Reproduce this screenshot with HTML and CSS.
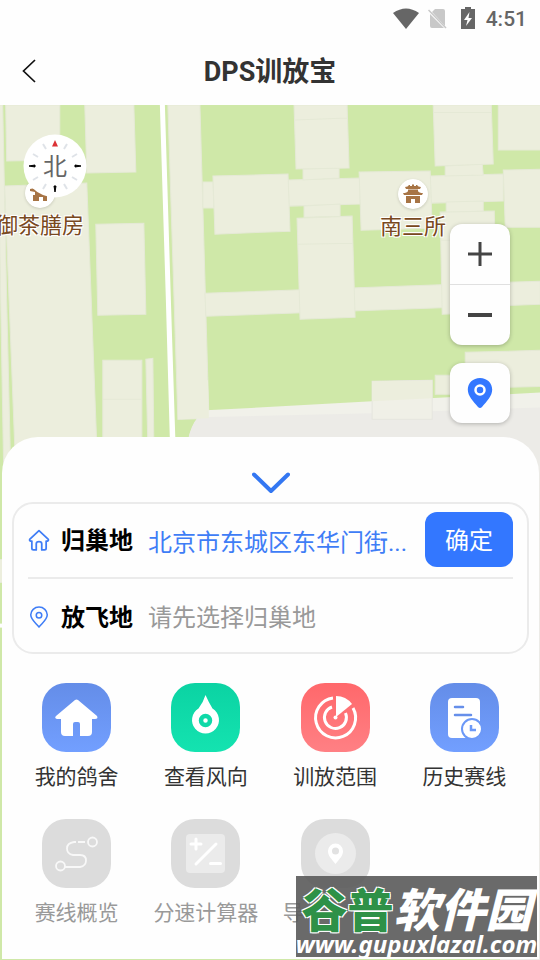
FILE: index.html
```html
<!DOCTYPE html>
<html lang="zh-CN">
<head>
<meta charset="utf-8">
<meta name="viewport" content="width=device-width, initial-scale=1">
<title>DPS训放宝</title>
<link rel="stylesheet" href="styles.css">
</head>
<body>
<div class="status-bar">
  <svg class="status-wifi" viewBox="0 0 26 21" width="26" height="21"><path d="M0 5Q13-4 26 5L13 21Z" fill="#666"/></svg>
  <svg class="status-sim" viewBox="0 0 19 21" width="19" height="21"><path d="M7 1h8q2 0 2 2v15L4 4ZM2 6l14 14H4q-2 0-2-2Z" fill="#c8c8c8"/><path d="M.5 2l17.500 18" stroke="#c8c8c8" stroke-width="1.500"/></svg>
  <svg class="status-battery" viewBox="0 0 14 22" width="14" height="22"><path d="M4 0h6v2h4v20H0V2h4Z" fill="#666"/><path d="M8.500 5L3 13h3.500L5 19l6-8H7.500Z" fill="#fefefe"/></svg>
  <time>4:51</time>
</div>
<header class="title-bar">
  <button class="back" type="button" aria-label="返回"><svg viewBox="0 0 14 24" width="14" height="24"><path d="M13 1L1.500 12 13 23" fill="none" stroke="#111" stroke-width="1.700"/></svg></button>
  <h1>DPS训放宝</h1>
</header>
<main class="stage">
  <svg class="map" viewBox="0 105 540 855" preserveAspectRatio="xMidYMin slice" aria-hidden="true">
    <path fill="#cfe8a8" d="M0 105h540v855H0Z"/>
    <g fill="#eceedd" stroke="#e5e9d6" stroke-width="1">
      <path d="M-2 105H3L7 300 11 470H4L1 300Z"/>
      <path d="M6 105H60V160L7 161Z"/>
      <path d="M5 186L87 183 97 445H15Z"/>
      <path d="M85 105H134L136 172 87 173Z"/>
      <path d="M96 224L144 223 146 314 98 315Z"/>
      <path d="M103 360H142V445H103ZM103 399H142"/>
      <path d="M146 359L153 358 154 445H148Z"/>
      <path d="M168 105H200L209 418 178 419Z"/>
      <path d="M203 182H213L214 208H203Z"/>
      <path d="M205 293L540 281V304L206 316Z"/>
      <path d="M288 180L360 178V204L289 206Z"/>
      <path d="M213 176L288 174 290 231 215 234Z"/>
      <path d="M303 169L339 168V178L303 180Z"/>
      <path d="M294 105H347L349 168 296 169ZM295 120L347 118"/>
      <path d="M304 206L340 204V216L304 217Z"/>
      <path d="M297 218L352 216 355 317 300 319ZM298 244L353 243"/>
      <path d="M430 176L503 174V201L431 203Z"/>
      <path d="M359 172L430 171 432 228 361 230Z"/>
      <path d="M445 166L482 164 483 175 445 176Z"/>
      <path d="M433 105H491L493 164 435 166ZM433 112.500H491"/>
      <path d="M498 105H542V150H498Z"/>
      <path d="M446 202L483 201V211L446 213Z"/>
      <path d="M440 212L494 211 497 312 442 314ZM440 240H494"/>
      <path d="M503 170L542 169V227H505Z"/>
      <path d="M465 352L542 350V386L465 388Z"/>
      <path d="M435 375H455V394H435Z"/>
      <path d="M-2 559H4V582H-2Z"/>
    </g>
    <path d="M188 440Q193 419 206 410L372 401 542 392V960H500V480Z" fill="#f1f1ea"/>
    <path d="M188 440Q191 425 198 417L372 413 542 407V960H500V480Z" fill="#ecebe7"/>
    <path d="M178 380L208 380 209 418 178 419Z" fill="#eceedd"/>
    <path d="M372 381L432 380V419H372Z" fill="#f0f0e7" stroke="#e5e5de"/>
    <path d="M372 381L432 380V398L372 401Z" fill="#eceedd"/>
    <path d="M160 105H165L171 300 175.500 440H170L166 300Z" fill="#fff"/>
    <path d="M0 625H4" stroke="#fff" stroke-width="4"/>
  </svg>
  <section class="map-view" aria-label="地图">
    <div class="poi poi-left">
      <svg viewBox="0 0 30 30" width="30" height="30"><circle cx="15" cy="15" r="15" fill="#fff"/><path d="M5 11l5-1 4 2 8 2 1 3H10v-3L5 13ZM8 17h14v6h-4v-4h-4v4H8Z" fill="#a77445"/></svg>
      <span>御茶膳房</span>
    </div>
    <div class="poi poi-right">
      <svg viewBox="0 0 30 30" width="30" height="30"><circle cx="15" cy="15" r="15" fill="#fff"/><path d="M7 8q3 0 4-2h1v1h2V5.500h2V7h2V6h1q1 2 4 2l-1 2H8ZM10 10.500h10v2H10ZM5 14q4 0 5-2h10q1 2 5 2l-1 2H6ZM8 17h14v7h-5v-4h-4v4H8Z" fill="#a77445"/></svg>
      <span>南三所</span>
    </div>
    <div class="compass">
      <svg viewBox="0 0 64 64" width="64" height="64" aria-hidden="true">
        <circle cx="32" cy="32" r="31.500" fill="#fff"/>
        <g stroke="#dfe3e8" stroke-width="2"><path d="M44 10l-3 5M54 20l-5 3M54 46l-5-3M44 55l-3-5M20 55l3-5M10 46l5-3M10 20l5 3M20 10l3 5"/></g>
        <path d="M32 6l3 6.500h-6Z" fill="#dc3236"/><path d="M6 32l6-1v2ZM58 32l-6-1v2ZM32 58l-1-6h2Z" fill="#000" stroke="#000"/>
      </svg>
      <span>北</span>
    </div>
    <div class="controls">
      <div class="zoom">
        <button type="button" aria-label="放大"><svg viewBox="0 0 24 24" width="24" height="24"><path d="M12 0v24M0 12h24" stroke="#444" stroke-width="3"/></svg></button>
        <button type="button" aria-label="缩小"><svg viewBox="0 0 24 24" width="24" height="24"><path d="M0 12h24" stroke="#444" stroke-width="4"/></svg></button>
      </div>
      <button class="locate" type="button" aria-label="定位"><svg viewBox="0 0 26 32" width="26" height="32"><path d="M13 1C6 1 .8 6 .8 12.500.8 19 6 24 11 30q2 2 4 0c5-6 10.200-11 10.200-17.500C25.200 6 20 1 13 1Z" fill="#3377ff"/><circle cx="13" cy="13" r="4.500" fill="none" stroke="#fff" stroke-width="2.500"/></svg></button>
    </div>
  </section>
  <section class="sheet">
    <button class="collapse" type="button" aria-label="收起"><svg viewBox="0 0 38 22" width="38" height="22"><path d="M2 2.500L19 19 36 2.500" fill="none" stroke="#3377f2" stroke-width="4" stroke-linecap="round" stroke-linejoin="round"/></svg></button>
    <form class="places">
      <div class="place place-home">
        <svg viewBox="0 0 20 20" width="22" height="22"><path d="M1.500 9.500L10 1.500 18.500 9.500Q19 11 16.500 11V17.500Q16.500 19 15 19H12.500V13.500Q12.500 11.500 10 11.500T7.500 13.500V19H5Q3.500 19 3.500 17.500V11Q1 11 1.500 9.500Z" fill="none" stroke="#3f7df6" stroke-width="1.600" stroke-linejoin="round"/></svg>
        <label for="home">归巢地</label>
        <input id="home" type="text" value="北京市东城区东华门街..." readonly>
        <button type="button">确定</button>
      </div>
      <div class="place place-release">
        <svg viewBox="0 0 20 20" width="22" height="22"><path d="M10 19C5.500 14 2.500 12 2.500 8a7.500 7 0 0 1 15 0C17.500 12 14.500 14 10 19Z" fill="none" stroke="#3f7df6" stroke-width="1.400"/><circle cx="10" cy="8.500" r="2.500" fill="none" stroke="#3f7df6" stroke-width="1.400"/></svg>
        <label for="release">放飞地</label>
        <input id="release" type="text" placeholder="请先选择归巢地" readonly>
      </div>
    </form>
    <nav class="tools">
      <button type="button" class="tool">
        <svg class="tile blue" viewBox="0 0 69 69"><path d="M33 17q1.500-1 3 0L55 33q1.500 3-2 3H50V49q0 4-4 4H38V41q0-2-2-2H33q-2 0-2 2V53H23q-4 0-4-4V36H15q-3-1-1-3Z" fill="#fff"/></svg>
        <span>我的鸽舍</span>
      </button>
      <button type="button" class="tool">
        <svg class="tile green" viewBox="0 0 69 69"><path d="M34.500 12Q38 20 41.500 25.500A13.500 13.500 0 1 1 27.500 25.500Q32 20 34.500 12Z" fill="#fff"/><circle cx="34.500" cy="37.500" r="4.500" fill="none" stroke="#0fd9a8" stroke-width="4.500"/></svg>
        <span>查看风向</span>
      </button>
      <button type="button" class="tool">
        <svg class="tile red" viewBox="0 0 69 69"><g fill="none" stroke="#fff"><path d="M32 15A20 20 0 1 0 52 25" stroke-width="3"/><path d="M31 24A11 11 0 1 0 44.500 30" stroke-width="3"/></g><path d="M35 34V13Q45 13 51 21Z" fill="#fff"/><circle cx="34.500" cy="34.500" r="2" fill="#fff"/></svg>
        <span>训放范围</span>
      </button>
      <button type="button" class="tool">
        <svg class="tile blue" viewBox="0 0 69 69"><rect x="18" y="15" width="32" height="40" rx="4" fill="#fff"/><path d="M25 24h8M25 32h16" stroke="#668fea" stroke-width="2.500" stroke-linecap="round"/><circle cx="42" cy="46" r="10" fill="#fff" stroke="#6c99f7" stroke-width="2"/><path d="M41 42v5h5" fill="none" stroke="#6c99f7" stroke-width="2.500"/></svg>
        <span>历史赛线</span>
      </button>
      <button type="button" class="tool" disabled>
        <svg class="tile" viewBox="0 0 69 69"><g fill="none" stroke="#f8f8f8" stroke-width="1.800"><circle cx="18.500" cy="47" r="4.500"/><circle cx="50.500" cy="23" r="4.500"/><path d="M23 48H38Q44 47 44 41.500T38 36H31Q25 35 25 29.500T32 23H34M36 23h7"/></g></svg>
        <span>赛线概览</span>
      </button>
      <button type="button" class="tool" disabled>
        <svg class="tile" viewBox="0 0 69 69"><rect x="15" y="15" width="39" height="39" rx="4" fill="#ebebeb"/><path d="M25 20v10M20 25h10M25 45L45 25M39.500 44.500h10" stroke="#fff" stroke-width="3" stroke-linecap="round"/></svg>
        <span>分速计算器</span>
      </button>
      <button type="button" class="tool" disabled>
        <svg class="tile" viewBox="0 0 69 69"><circle cx="34.500" cy="34.500" r="20.500" fill="#ebebeb"/><path d="M34.500 45C30 39 27 37 27 32a7.500 7.500 0 0 1 15 0C42 37 39 39 34.500 45Z" fill="#fff"/><circle cx="34.500" cy="32" r="3.500" fill="#e2e2e2"/></svg>
        <span class="label-start">导</span>
      </button>
    </nav>
  </section>
  <aside class="watermark">
    <strong><em>谷普</em>软件园</strong>
    <span>www.gupuxlazal.com</span>
  </aside>
</main>
</body>
</html>
```
FILE: styles.css
```css
* {
  box-sizing: border-box;
}

body {
  margin: 0;
  min-height: 100vh;
  display: flex;
  flex-direction: column;
  background: #fefefe;
  color: #333;
  font-family: Roboto, "Noto Sans CJK SC", sans-serif;
}

svg {
  display: block;
  flex-shrink: 0;
}

button,
input {
  margin: 0;
  padding: 0;
  border: 0;
  background: none;
  color: inherit;
  font: inherit;
}

.status-bar {
  display: flex;
  align-items: center;
  justify-content: flex-end;
  height: 36px;
  padding-right: 13px;
  color: #666;
}

.status-sim {
  margin-left: 9px;
}

.status-battery {
  margin: 0 11px 0 14px;
}

.status-bar time {
  padding-top: 2px;
  font-size: 21px;
  line-height: 36px;
  font-weight: 500;
}

.title-bar {
  display: grid;
  grid-template-columns: 36px 1fr 36px;
  align-items: center;
  height: 69px;
}

.back {
  padding-left: 22px;
}

.title-bar h1 {
  margin: 0;
  padding-top: 2px;
  text-align: center;
  font-size: 27px;
  line-height: 36px;
  font-weight: 700;
}

.stage {
  position: relative;
  flex: 1;
  display: flex;
  flex-direction: column;
  overflow: hidden;
}

.map {
  position: absolute;
  inset: 0;
  width: 100%;
  height: 100%;
}

.map-view {
  position: relative;
  flex: 1;
  display: flex;
  justify-content: flex-end;
  align-items: flex-end;
  min-height: 332px;
  padding: 0 30px 14px;
}

.poi {
  position: absolute;
  display: flex;
  flex-direction: column;
  align-items: center;
  gap: 2px;
  color: #784820;
  font-size: 22px;
  line-height: 32px;
  white-space: nowrap;
  text-shadow: 1px 1px 0 #fff, -1px -1px 0 #fff, 1px -1px 0 #fff, -1px 1px 0 #fff;
}

.poi svg {
  border-radius: 50%;
  box-shadow: 0 1px 3px rgba(0, 0, 0, .15);
}

.poi-left {
  left: -4px;
  top: 73px;
}

.poi-right {
  left: 380px;
  top: 74px;
}

.compass {
  position: absolute;
  left: 23px;
  top: 29px;
  display: grid;
  place-items: center;
}

.compass > * {
  grid-area: 1 / 1;
}

.compass span {
  padding-top: 2px;
  color: #666;
  font-size: 24px;
  line-height: 32px;
}

.controls {
  position: relative;
  display: flex;
  flex-direction: column;
  gap: 18px;
}

.zoom,
.locate {
  width: 60px;
  border-radius: 12px;
  background: #fefefe;
  box-shadow: 0 1px 4px rgba(0, 0, 0, .25);
}

.zoom button,
.locate {
  display: grid;
  place-items: center;
  width: 60px;
  height: 60px;
}

.zoom button + button {
  height: 61px;
  border-top: 1px solid #e0e0e0;
}

.sheet {
  position: relative;
  margin: 0 1px 2px 2px;
  padding: 35px 10px 30px;
  border-radius: 36px 36px 0 0;
  background: #fefefe;
}

.collapse {
  display: block;
  margin: 0 auto 8px;
}

.places {
  padding: 0 14px;
  border: 2px solid #ebebeb;
  border-radius: 21px;
  font-size: 24px;
  line-height: 36px;
}

.place {
  display: flex;
  align-items: center;
}

.place-home {
  padding: 8px 0 10px;
  border-bottom: 2px solid #ebebeb;
  color: #3f7df6;
}

.place-release {
  padding: 19px 0 16px;
}

.place label {
  margin: 0 15px 0 11px;
  padding-top: 2px;
  color: #000;
  font-weight: 700;
}

.place input {
  flex: 1;
  min-width: 0;
  height: 38px;
  padding-top: 2px;
  outline: 0;
}

.place input::placeholder {
  color: #999;
  opacity: 1;
}

.place button {
  width: 88px;
  height: 55px;
  padding-top: 2px;
  margin-left: 16px;
  border-radius: 12px;
  background: #3377ff;
  color: #fff;
}

.tools {
  display: grid;
  grid-template-columns: repeat(4, 1fr);
  row-gap: 26px;
  margin-top: 29px;
}

.tool {
  display: flex;
  flex-direction: column;
  align-items: center;
  gap: 9px;
  font-size: 21px;
  line-height: 32px;
  white-space: nowrap;
}

.tile {
  width: 69px;
  height: 69px;
  border-radius: 24px;
  background: #dcdcdc;
}

.tile.blue {
  background: linear-gradient(#648de8, #729fff);
}

.tile.green {
  background: linear-gradient(#0bd3a3, #14e3b0);
}

.tile.red {
  background: linear-gradient(#ff686b, #ff8084);
}

.tool:disabled {
  color: #999;
}

.label-start {
  width: 5em;
  text-align: left;
}

.watermark {
  position: absolute;
  right: 3px;
  bottom: 4px;
  display: flex;
  flex-direction: column;
  align-items: center;
  width: 241px;
  height: 81px;
  padding-top: 5px;
  background: rgba(90, 90, 90, .9);
  color: #fff;
  font-style: italic;
  font-weight: 700;
  white-space: nowrap;
}

.watermark strong {
  font-family: "Noto Sans CJK SC", sans-serif;
  font-size: 46px;
  line-height: 52px;
  font-weight: 900;
}

.watermark em {
  color: #2e9147;
  font-style: normal;
  text-shadow: 1px 1px 0 #fff, -1px -1px 0 #fff, 1px -1px 0 #fff, -1px 1px 0 #fff;
}

.watermark span {
  font-family: "Noto Sans", sans-serif;
  font-size: 24px;
  line-height: 22px;
}
```
